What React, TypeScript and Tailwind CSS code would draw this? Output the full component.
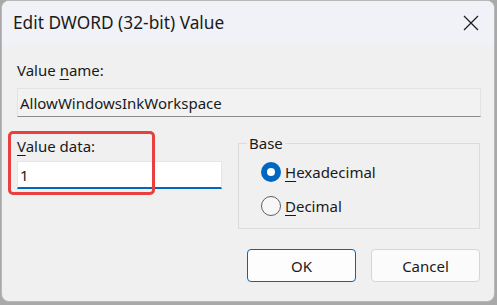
import React from "react";

function Radio({ checked, label, accel }: { checked: boolean; label: string; accel: string }) {
  return (
    <div className="flex items-center h-[20px]">
      {checked ? (
        <div className="w-[20px] h-[20px] rounded-full bg-[#0067c0] flex items-center justify-center shrink-0">
          <div className="w-[8px] h-[8px] rounded-full bg-white" />
        </div>
      ) : (
        <div className="w-[20px] h-[20px] rounded-full border border-[#5f5f5f] bg-[#f7f7f7] shrink-0" />
      )}
      <span className="ml-[4px] text-[15px] leading-[20px] text-[#1a1a1a]">
        <span className="underline underline-offset-[3px] decoration-[1px]">{accel}</span>
        {label}
      </span>
    </div>
  );
}

export default function App() {
  return (
    <div
      className="w-[497px] h-[305px] bg-[#a9a9a9] pl-[1px] pr-[2px] pb-[3px] overflow-hidden"
      style={{ fontFamily: '"Noto Sans", "Open Sans", sans-serif' }}
    >
      <div className="w-full h-full rounded-[8px] border border-[#b8b8b8] bg-[#f0f0f0] overflow-hidden flex flex-col">
        {/* Title bar */}
        <div className="h-[44px] shrink-0 bg-[#f1f2f7] flex items-center justify-between pl-[11px] pr-[15px]">
          <span className="text-[17.3px] leading-[20px] text-[#1b1b1b]">Edit DWORD (32-bit) Value</span>
          <svg width="16" height="16" viewBox="0 0 16 16" className="shrink-0">
            <path d="M1 1 L15 15 M15 1 L1 15" stroke="#1b1b1b" strokeWidth="1.2" fill="none" />
          </svg>
        </div>

        {/* Body */}
        <div className="flex-1 flex flex-col pl-[15px] pr-[13px] pt-[15px] text-[15px] text-[#1a1a1a]">
          <div className="h-[20px] leading-[20px]">
            Value <span className="underline underline-offset-[3px] decoration-[1px]">n</span>ame:
          </div>
          <div className="mt-[8px] h-[29px] bg-[#f2f2f2] border border-[#e2e2e2] border-b-[#8c8c8c] flex items-center pl-[2px] leading-[20px]">
            AllowWindowsInkWorkspace
          </div>

          <div className="mt-[19px] flex">
            {/* Value data */}
            <div className="relative w-[205px] shrink-0">
              <div className="absolute left-[-9px] top-[-5px] w-[147px] h-[64px] rounded-[5px] border-[3px] border-[#e8403f] pointer-events-none z-10" />
              <div className="h-[20px] leading-[20px]">
                <span className="underline underline-offset-[3px] decoration-[1px]">V</span>alue data:
              </div>
              <div className="mt-[5px] h-[28px] bg-white border border-[#e6e6e6] border-b-[2px] border-b-[#0067c0] flex items-center pl-[2px] leading-[20px]">
                1
              </div>
            </div>

            {/* Base group */}
            <div className="relative ml-[16px] mt-[7px] w-[242px] h-[86px] border border-[#dcdcdc] pl-[22px] pt-[18px] flex flex-col gap-[14px]">
              <span className="absolute left-[8px] top-[-11px] bg-[#f0f0f0] px-[2px] leading-[20px]">Base</span>
              <Radio checked label="exadecimal" accel="H" />
              <Radio checked={false} label="ecimal" accel="D" />
            </div>
          </div>

          <div className="mt-[20px] flex justify-end gap-[15px] pr-[1px]">
            <button className="w-[109px] h-[33px] rounded-[4px] bg-[#fdfdfd] border border-[#0067c0] text-[15px] text-[#1a1a1a] leading-[20px]">
              OK
            </button>
            <button className="w-[109px] h-[33px] rounded-[4px] bg-[#fbfbfb] border border-[#d5d5d5] text-[15px] text-[#1a1a1a] leading-[20px]">
              Cancel
            </button>
          </div>
        </div>
      </div>
    </div>
  );
}
